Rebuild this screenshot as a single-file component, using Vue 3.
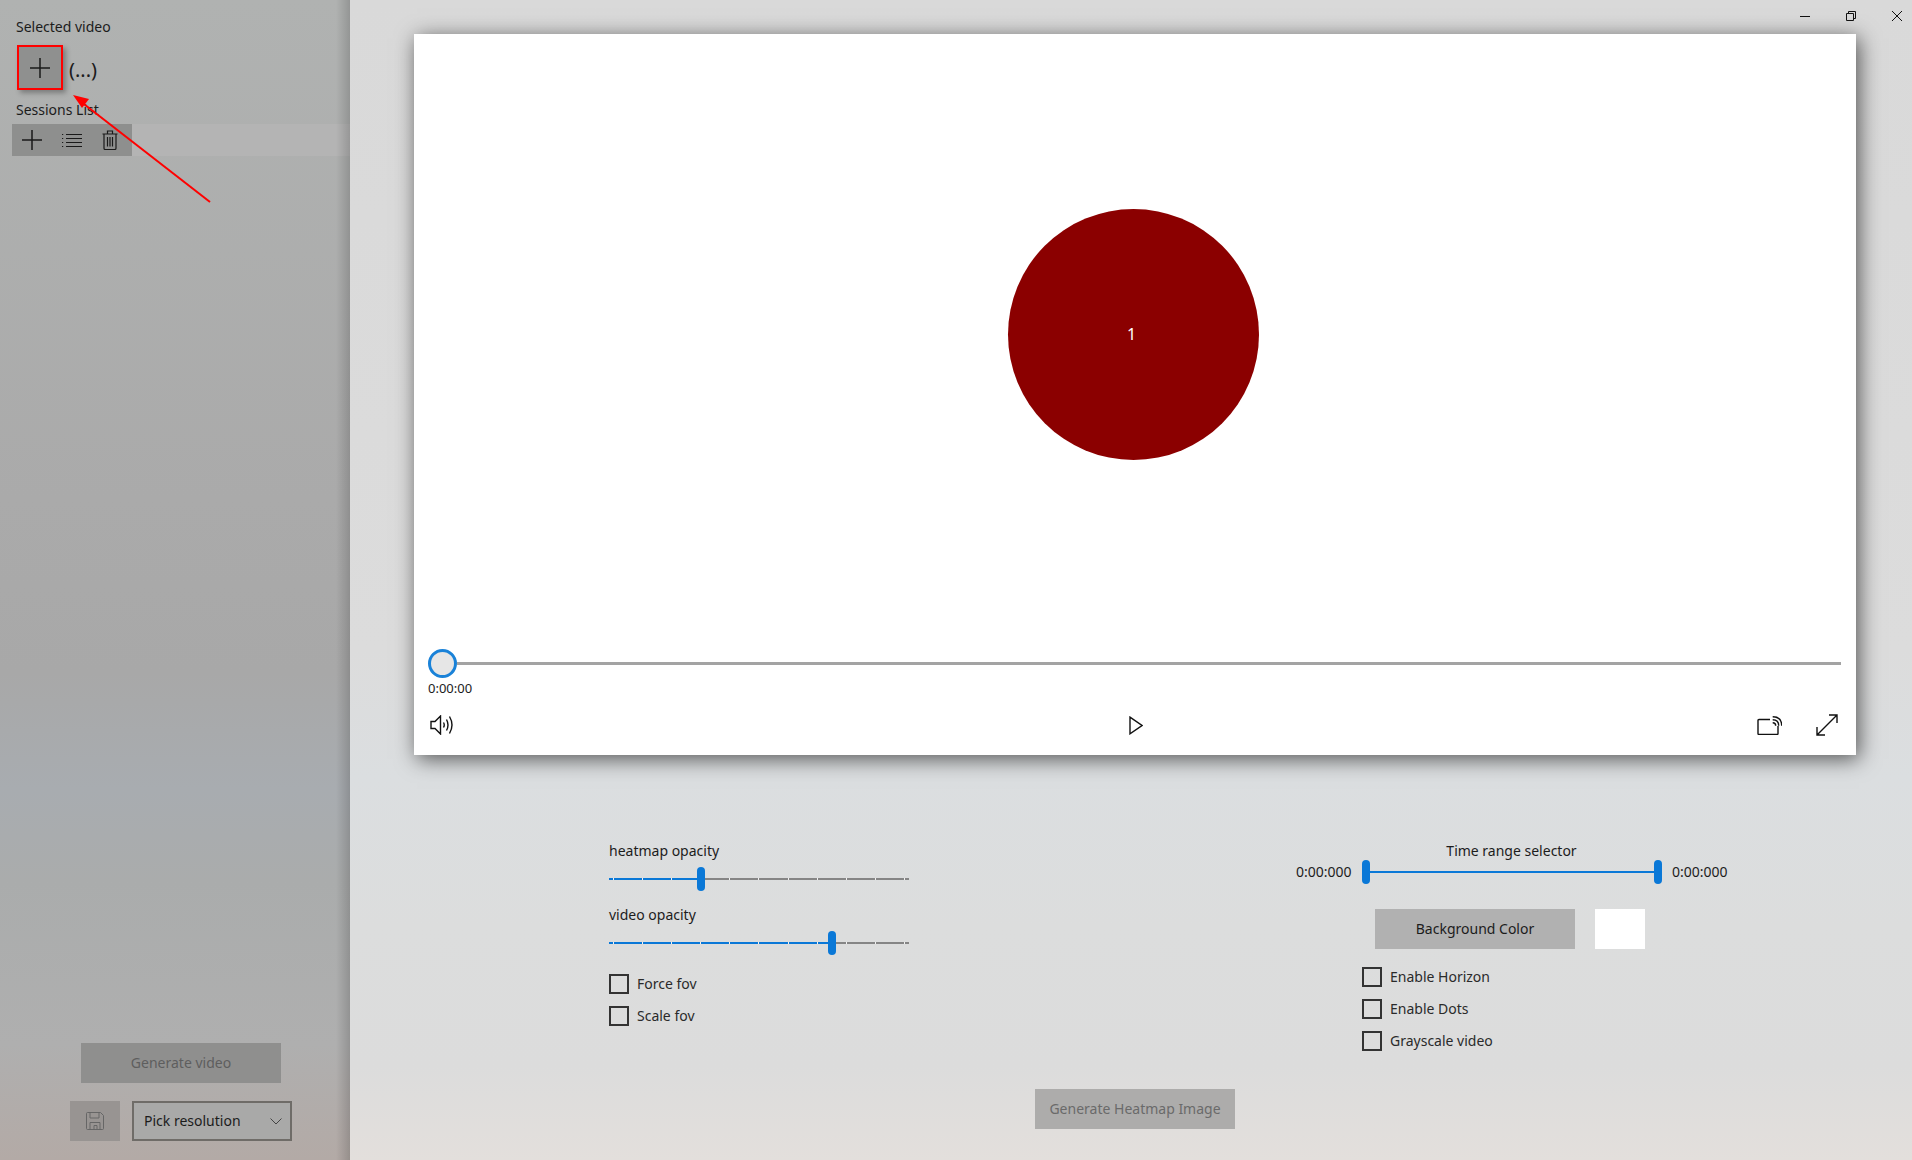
<script setup>
const ticks = Array.from({ length: 11 }, (_, i) => i)

const sliders = [
  { label: 'heatmap opacity', value: 30 },
  { label: 'video opacity', value: 75 },
]
const leftChecks = ['Force fov', 'Scale fov']
const rightChecks = ['Enable Horizon', 'Enable Dots', 'Grayscale video']

// thumb travels between the 4px insets of the track
const thumbPos = (v) => `calc(4px + (100% - 8px) * ${v / 100})`
</script>

<template>
  <div class="app">
    <aside class="side">
      <div class="side-label">Selected video</div>
      <div class="pick-row">
        <button class="pick-btn" aria-label="Pick video">
          <svg width="20" height="20" viewBox="0 0 20 20"><path d="M10 0v20M0 10h20" class="ico" /></svg>
        </button>
        <span class="pick-name">(...)</span>
      </div>
      <div class="side-label sessions">Sessions List</div>
      <div class="toolbar">
        <div class="tools">
          <span class="tool">
            <svg width="20" height="20" viewBox="0 0 20 20"><path d="M10 0v20M0 10h20" class="ico" /></svg>
          </span>
          <span class="tool">
            <svg width="20" height="13" viewBox="0 0 20 13"><path d="M0 .5h1.200M4 .5h16M0 4.500h1.200M4 4.500h16M0 8.500h1.200M4 8.500h16M0 12.500h1.200M4 12.500h16" class="ico-list" /></svg>
          </span>
          <span class="tool trash">
            <svg width="16" height="20" viewBox="0 0 16 20"><path d="M.5 4h15M5.500 4V1h5v3M2 4v14.200q0 1.300 1.300 1.300h9.400q1.300 0 1.300-1.300V4M5.500 7v9.500M8 7v9.500M10.500 7v9.500" class="ico-list" /></svg>
          </span>
        </div>
      </div>
      <div class="side-bottom">
        <button class="btn btn-off gen-video">Generate video</button>
        <div class="res-row">
          <button class="save-btn" aria-label="Save">
            <svg width="18" height="18" viewBox="0 0 18 18"><path d="M1.500 .5h13l3 3v13q0 1-1 1h-15q-1 0-1-1v-15q0-1 1-1ZM4 .5v5.500h9V.5M4 17.500V10.500h10v7M8 17.500v-4h3v4" class="ico-dim" /></svg>
          </button>
          <div class="select">
            <span>Pick resolution</span>
            <svg width="12" height="7" viewBox="0 0 12 7"><path d="M.5.500 6 6 11.500.5" fill="none" stroke="#444" stroke-width="1" /></svg>
          </div>
        </div>
      </div>
    </aside>

    <main class="main">
      <section class="player">
        <div class="stage">
          <div class="circle">1</div>
        </div>
        <div class="transport">
          <div class="seek">
            <span class="seek-thumb"></span>
            <span class="seek-track"></span>
          </div>
          <div class="seek-time">0:00:00</div>
          <div class="buttons">
            <svg class="speaker" width="24" height="20" viewBox="0 0 24 20"><path d="M1 6.500h4L10.500 1v18L5 13.500H1ZM13.500 7.500q1.500 2.500 0 5M16.500 4.500q3 5.500 0 11M19.500 1.500q5 8.500 0 17" class="ico-thin" /></svg>
            <svg class="play" width="14" height="19" viewBox="0 0 14 19"><path d="M1 1.200 13 9.500 1 17.800Z" class="ico-thin" /></svg>
            <div class="right-btns">
              <svg width="25" height="20" viewBox="0 0 25 20"><path d="M13 4.500H2Q1 4.500 1 5.500v13q0 1 1 1h18q1 0 1-1V11M15.700 1.700q9 0 9 9M15.700 4.700q6 0 6 6M15.700 7.700q3 0 3 3" class="ico-thin" /></svg>
              <svg width="22" height="22" viewBox="0 0 22 22"><path d="M1 21 21 1M13 1h8v8M1 13v8h8" class="ico-thin" /></svg>
            </div>
          </div>
        </div>
      </section>

      <div class="controls">
        <div class="col-left">
          <div v-for="s in sliders" :key="s.label" class="opacity">
            <div class="ctl-label">{{ s.label }}</div>
            <div class="slider">
              <span class="track"></span>
              <span class="fill" :style="{ width: thumbPos(s.value) }"></span>
              <span v-for="t in ticks" :key="t" class="tick"></span>
              <span class="thumb" :style="{ left: thumbPos(s.value) }"></span>
            </div>
          </div>
          <div class="checks">
            <label v-for="c in leftChecks" :key="c" class="check"><span class="box"></span>{{ c }}</label>
          </div>
        </div>

        <div class="col-right">
          <div class="range-title">Time range selector</div>
          <div class="range-row">
            <span>0:00:000</span>
            <div class="range">
              <span class="range-line"></span>
              <span class="rthumb"></span>
              <span class="rthumb"></span>
            </div>
            <span class="range-end">0:00:000</span>
          </div>
          <div class="bg-row">
            <button class="btn">Background Color</button>
            <span class="swatch"></span>
          </div>
          <div class="checks right">
            <label v-for="c in rightChecks" :key="c" class="check"><span class="box"></span>{{ c }}</label>
          </div>
        </div>
      </div>

      <div class="gen-wrap">
        <button class="btn btn-off">Generate Heatmap Image</button>
      </div>
    </main>

    <div class="caption">
      <svg width="10" height="10" viewBox="0 0 10 10"><path d="M0 5.500h10" class="cap" /></svg>
      <svg width="10" height="10" viewBox="0 0 10 10"><path d="M.5 2.500h7v7h-7ZM2.500 2.500V.5h7v7h-2" class="cap" /></svg>
      <svg width="10" height="10" viewBox="0 0 10 10"><path d="M0 0l10 10M10 0 0 10" class="cap" /></svg>
    </div>

    <!-- red annotation pointing at the add button -->
    <svg class="note" width="230" height="220" viewBox="0 0 230 220">
      <path d="M210 202 80 101" stroke="#f00" stroke-width="2" fill="none" />
      <path d="M73 95 89 99 82 108Z" fill="#f00" />
    </svg>
  </div>
</template>

<style scoped>
.app {
  position: relative;
  display: flex;
  width: 1912px;
  height: 1160px;
  overflow: hidden;
  font-family: "Noto Sans", "Open Sans", Arial, sans-serif;
  font-size: 14px;
  line-height: 20px;
  color: #1c1c1c;
  background: linear-gradient(180deg, #d9d9d9 0%, #dcdcdc 56%, #dbdee0 67%, #dcdddd 80%, #dcdcdc 92%, #e3dfdc 100%);
}
button { font: inherit; border: 0; padding: 0; }
.ico { fill: none; stroke: #1a1a1a; stroke-width: 1.5; }
.ico-list { fill: none; stroke: #1a1a1a; stroke-width: 1.2; }
.ico-thin { fill: none; stroke: #111; stroke-width: 1.4; }
.ico-dim { fill: none; stroke: #666; stroke-width: 1; }
.cap { fill: none; stroke: #111; stroke-width: 1; }

.side {
  position: relative;
  width: 350px;
  flex: none;
  display: flex;
  flex-direction: column;
  padding-top: 17px;
  background: linear-gradient(180deg, #b0b2b1 0%, #aaaaaa 43%, #a8a8a8 58%, #a8acb0 68%, #aaacac 76%, #afafaf 90%, #b3aaa6 100%);
}
.side::after {
  content: "";
  position: absolute;
  top: 0;
  right: 0;
  bottom: 0;
  width: 14px;
  background: linear-gradient(90deg, rgba(0, 0, 0, 0), rgba(0, 0, 0, .16));
  pointer-events: none;
}
.side-label { padding-left: 16px; }
.pick-row { display: flex; align-items: center; gap: 6px; margin: 8px 0 0 17px; }
.pick-btn {
  width: 46px;
  height: 45px;
  display: flex;
  align-items: center;
  justify-content: center;
  background: #8f908f;
  border: 2px solid #f00;
  box-shadow: 3px 3px 5px rgba(0, 0, 0, .3);
}
.pick-name { font-size: 20px; margin-top: 4px; }
.sessions { margin-top: 10px; }
.toolbar { margin: 4px 0 0 12px; height: 32px; background: #b4b4b4; }
.tools { display: flex; width: 120px; height: 100%; background: #8e8f8e; }
.tool { width: 40px; display: flex; align-items: center; justify-content: center; }
.trash { margin-left: -2px; }

.side-bottom {
  margin-top: auto;
  margin-bottom: 19px;
  display: flex;
  flex-direction: column;
}
.gen-video { margin-left: 81px; }
.res-row { display: flex; gap: 12px; margin: 18px 0 0 70px; }
.save-btn {
  width: 50px;
  height: 40px;
  display: flex;
  align-items: center;
  justify-content: center;
  background: #989492;
}
.select {
  width: 160px;
  height: 40px;
  box-sizing: border-box;
  display: flex;
  align-items: center;
  justify-content: space-between;
  padding: 0 8px 0 10px;
  background: #a9a9a8;
  border: 2px solid #6f6c68;
}

.btn {
  width: 200px;
  height: 40px;
  background: #b1b1b1;
  color: #1c1c1c;
}
.btn-off { background: #8f8f8e; color: #5e5e5e; }
.gen-wrap .btn-off { background: #adacab; color: #6a6a6a; }

.main {
  flex: 1;
  display: flex;
  flex-direction: column;
  padding: 34px 0 31px 64px;
}
.player {
  width: 1442px;
  height: 721px;
  display: flex;
  flex-direction: column;
  background: #fff;
  box-shadow: 3px 4px 20px rgba(0, 0, 0, .62);
}
.stage {
  flex: 1;
  display: flex;
  align-items: center;
  justify-content: center;
  padding: 0 4px 0 0;
}
.circle {
  width: 251px;
  height: 251px;
  border-radius: 50%;
  background: #8b0000;
  color: #fff;
  display: flex;
  align-items: center;
  justify-content: center;
  padding: 0 3px 2px 0;
  box-sizing: border-box;
  font-size: 16px;
}
.transport { height: 120px; padding: 13px 15px 0 14px; box-sizing: border-box; }
.seek { display: flex; align-items: center; height: 30px; }
.seek-thumb {
  width: 29px;
  height: 29px;
  flex: none;
  box-sizing: border-box;
  border-radius: 50%;
  background: #e6e6e6;
  border: 3px solid #1a82d8;
}
.seek-track { flex: 1; height: 3px; background: #a3a3a3; }
.seek-time { font-size: 13px; }
.buttons {
  display: grid;
  grid-template-columns: 1fr auto 1fr;
  align-items: center;
  height: 30px;
  margin-top: 12px;
  padding-left: 2px;
}
.speaker { justify-self: start; }
.right-btns { justify-self: end; display: flex; align-items: center; gap: 34px; padding-right: 3px; }

.controls { display: flex; margin: 86px 0 0 195px; gap: 387px; }
.col-left { width: 300px; }
.ctl-label { height: 20px; }
.opacity + .opacity { margin-top: 14px; }
.slider {
  position: relative;
  display: flex;
  justify-content: space-between;
  align-items: center;
  height: 24px;
  margin-top: 6px;
  padding: 0 4px;
  box-sizing: border-box;
}
.track, .fill {
  position: absolute;
  left: 0;
  top: 11px;
  height: 2px;
}
.track { width: 100%; background: #858585; }
.fill { background: #0a78d7; }
.tick { position: relative; width: 1px; height: 2px; background: #f0f0f0; }
.thumb {
  position: absolute;
  top: 0;
  width: 8px;
  height: 24px;
  margin-left: -4px;
  border-radius: 4px;
  background: #0a78d7;
}
.checks { display: flex; flex-direction: column; gap: 12px; margin-top: 19px; }
.check { display: flex; align-items: center; gap: 8px; height: 20px; color: #2a2a2a; }
.box { width: 20px; height: 20px; box-sizing: border-box; border: 2px solid #333; }

.col-right { width: 431px; }
.range-title { text-align: center; height: 20px; }
.range-row {
  display: grid;
  grid-template-columns: 66px 300px 1fr;
  align-items: center;
  height: 24px;
  margin-top: -1px;
}
.range {
  position: relative;
  display: flex;
  justify-content: space-between;
  align-items: center;
  height: 24px;
}
.range-line { position: absolute; left: 4px; right: 4px; top: 11px; height: 2px; background: #0a78d7; }
.rthumb { width: 8px; height: 24px; border-radius: 4px; background: #0a78d7; }
.range-end { padding-left: 10px; }
.bg-row { display: flex; gap: 20px; margin: 25px 0 0 79px; }
.swatch { width: 50px; height: 40px; background: #fff; }
.checks.right { margin: 18px 0 0 66px; }

.gen-wrap { width: 1442px; margin-top: auto; display: flex; justify-content: center; }

.caption {
  position: absolute;
  top: 11px;
  right: 10px;
  display: flex;
  gap: 36px;
}
.note { position: absolute; left: 0; top: 0; pointer-events: none; }
</style>
